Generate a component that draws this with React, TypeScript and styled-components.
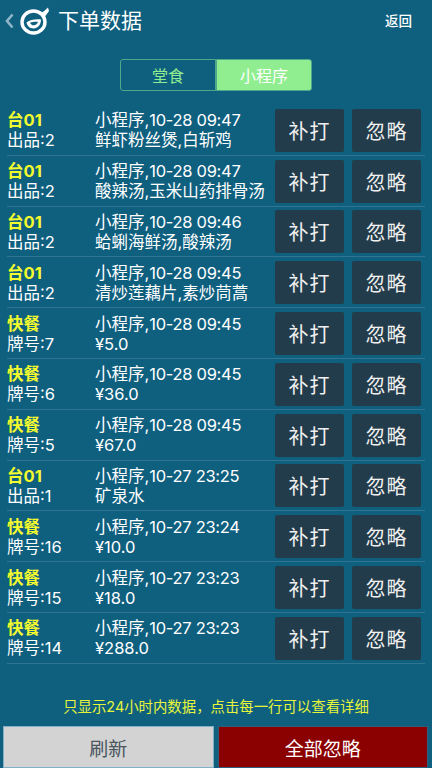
import React from 'react'
import styled, {createGlobalStyle} from 'styled-components'

const GlobalStyle = createGlobalStyle`
  html, body {
    margin: 0;
    padding: 0;
    background: #0f5f7f;
  }
  body {
    font-family: Inter, "Noto Sans CJK SC", sans-serif;
  }
  * {
    box-sizing: border-box;
  }
`

const Page = styled.div`
  width: 432px;
  height: 768px;
  background: #0f5f7f;
  display: flex;
  flex-direction: column;
  overflow: hidden;
  color: #fff;
`

const Header = styled.header`
  height: 59px;
  padding: 7px 20px 0 4px;
  display: flex;
  align-items: flex-start;
`

const BackArrow = styled.svg`
  width: 11px;
  height: 16px;
  margin: 6px 5px 0 0;
`

const Logo = styled.svg`
  width: 30px;
  height: 28px;
  margin-right: 8px;
`

const Title = styled.h1`
  margin: 0;
  font-size: 21px;
  line-height: 28px;
  font-weight: 400;
  flex: 1;
`

const BackLink = styled.span`
  font-size: 13.5px;
  line-height: 28px;
  font-weight: 500;
`

const Tabs = styled.div`
  display: flex;
  justify-content: center;
  margin-bottom: 14px;
`

const Tab = styled.div<{$active?: boolean}>`
  width: 96px;
  height: 32px;
  display: flex;
  align-items: center;
  justify-content: center;
  font-size: 16px;
  border: 1px solid #4fa88c;
  border-radius: ${p => (p.$active ? '0 3px 3px 0' : '3px 0 0 3px')};
  background: ${p => (p.$active ? '#90ee90' : 'transparent')};
  color: ${p => (p.$active ? '#fff' : '#90ee90')};
`

const List = styled.div`
  padding: 0 7px;
  flex: 1;
`

const Row = styled.div`
  height: 50.8px;
  display: flex;
  align-items: center;
  border-bottom: 1px solid #2f7490;
  padding-top: 1px;
`

const LeftCell = styled.div`
  flex: 0 0 88px;
  font-size: 16.5px;
  line-height: 20px;
`

const Tag = styled.div`
  color: #f3fb2e;
  font-weight: 700;
`

const MiddleCell = styled.div`
  flex: 0 0 180px;
  font-size: 16.5px;
  line-height: 20px;
  white-space: nowrap;
`

const Time = styled.span`
  letter-spacing: -0.3px;
`

const Actions = styled.div`
  display: flex;
  gap: 8px;
`

const RowButton = styled.button`
  width: 69px;
  height: 43px;
  padding: 0;
  border: none;
  border-radius: 2px;
  background: #233c4b;
  color: #f0f0f0;
  font-family: inherit;
  font-size: 20px;
  letter-spacing: 1px;
`

const Hint = styled.div`
  text-align: center;
  font-size: 14.4px;
  line-height: 20px;
  color: #e6f53a;
  margin-bottom: 9px;
`

const Footer = styled.div`
  display: flex;
  gap: 4px;
  padding: 0 4px 0 3px;
`

const FooterButton = styled.button<{$danger?: boolean}>`
  flex: 1;
  height: 42px;
  padding: 0;
  border: 1px solid ${p => (p.$danger ? '#2f5f7a' : '#7fb0c8')};
  font-family: inherit;
  font-size: 19px;
  background: ${p => (p.$danger ? '#8b0000' : '#d3d3d3')};
  color: ${p => (p.$danger ? '#fff' : '#4a5560')};
`

type OrderRow = {
    tag: string
    sub: string
    time: string
    detail: string
}

const rows: OrderRow[] = [
    {tag: '台01', sub: '出品:2', time: '10-28 09:47', detail: '鲜虾粉丝煲,白斩鸡'},
    {tag: '台01', sub: '出品:2', time: '10-28 09:47', detail: '酸辣汤,玉米山药排骨汤'},
    {tag: '台01', sub: '出品:2', time: '10-28 09:46', detail: '蛤蜊海鲜汤,酸辣汤'},
    {tag: '台01', sub: '出品:2', time: '10-28 09:45', detail: '清炒莲藕片,素炒茼蒿'},
    {tag: '快餐', sub: '牌号:7', time: '10-28 09:45', detail: '¥5.0'},
    {tag: '快餐', sub: '牌号:6', time: '10-28 09:45', detail: '¥36.0'},
    {tag: '快餐', sub: '牌号:5', time: '10-28 09:45', detail: '¥67.0'},
    {tag: '台01', sub: '出品:1', time: '10-27 23:25', detail: '矿泉水'},
    {tag: '快餐', sub: '牌号:16', time: '10-27 23:24', detail: '¥10.0'},
    {tag: '快餐', sub: '牌号:15', time: '10-27 23:23', detail: '¥18.0'},
    {tag: '快餐', sub: '牌号:14', time: '10-27 23:23', detail: '¥288.0'},
]

const App = () => {
    return (
        <Page>
            <GlobalStyle/>
            <Header>
                <BackArrow viewBox="0 0 11 16">
                    <path d="M8.5 1.5 L3 8 L8.5 14.5" fill="none" stroke="#8fb6c6" strokeWidth="2.6"/>
                </BackArrow>
                <Logo viewBox="0 0 30 28">
                    <ellipse cx="13.5" cy="15" rx="11.5" ry="11" fill="none" stroke="#fff" strokeWidth="3.4"/>
                    <path d="M6.5 15.5 C10 12.5 16 12 21 12.5 C21 18 17.5 21.5 13.5 21.5 C9.5 21.5 7 18.5 6.5 15.5 Z" fill="#fff"/>
                    <path d="M10 15.7 C12.5 14.7 15.5 14.6 18 14.8 C17.4 16.9 15.8 18.3 13.8 18.3 C12 18.3 10.6 17.2 10 15.7 Z" fill="#0f5f7f"/>
                    <path d="M20 6.5 C23 5 25.5 3 28 0.5 L29 4 C27.5 6.5 25.5 9 23 11 Z" fill="#fff"/>
                </Logo>
                <Title>下单数据</Title>
                <BackLink>返回</BackLink>
            </Header>
            <Tabs>
                <Tab>堂食</Tab>
                <Tab $active>小程序</Tab>
            </Tabs>
            <List>
                {rows.map((row, i) => (
                    <Row key={i}>
                        <LeftCell>
                            <Tag>{row.tag}</Tag>
                            <div>{row.sub}</div>
                        </LeftCell>
                        <MiddleCell>
                            <div>小程序,<Time>{row.time}</Time></div>
                            <div>{row.detail}</div>
                        </MiddleCell>
                        <Actions>
                            <RowButton>补打</RowButton>
                            <RowButton>忽略</RowButton>
                        </Actions>
                    </Row>
                ))}
            </List>
            <Hint>只显示24小时内数据，点击每一行可以查看详细</Hint>
            <Footer>
                <FooterButton>刷新</FooterButton>
                <FooterButton $danger>全部忽略</FooterButton>
            </Footer>
        </Page>
    )
}

export default App
